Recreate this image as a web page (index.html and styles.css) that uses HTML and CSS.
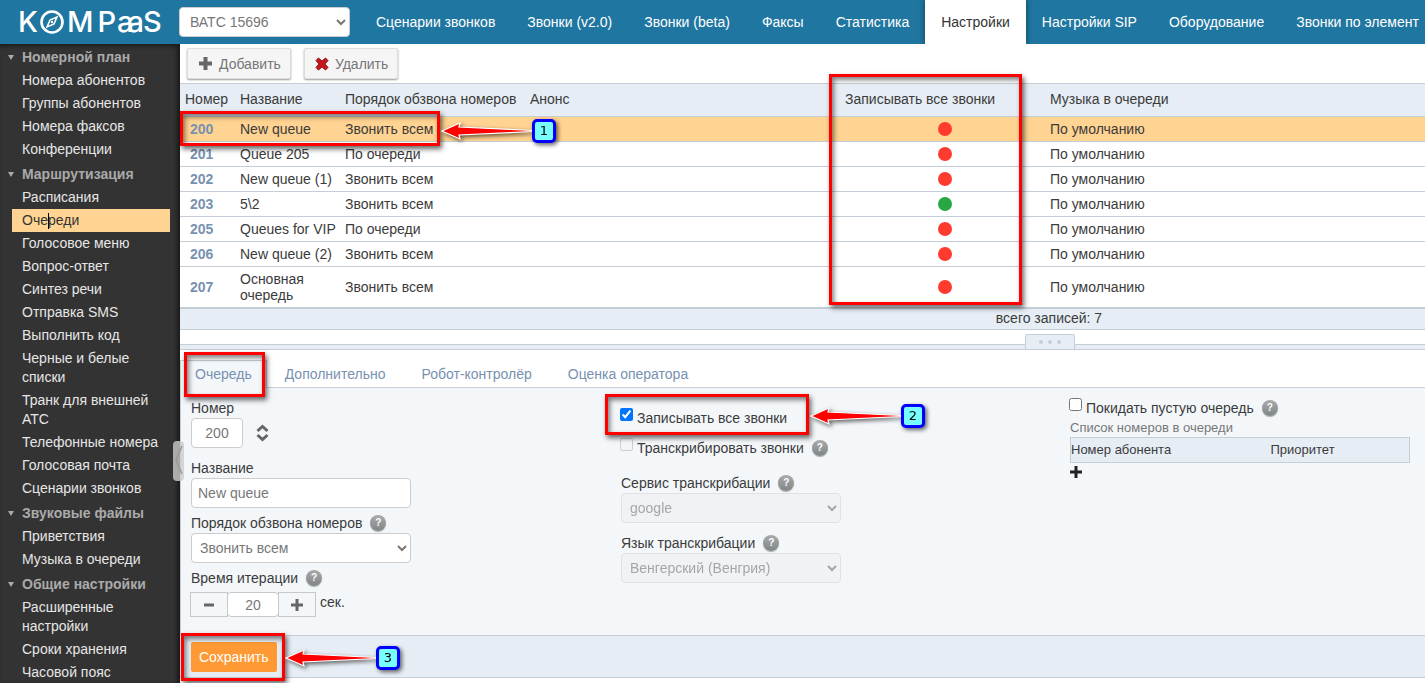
FILE: index.html
```html
<!DOCTYPE html>
<html lang="ru">
<head>
    <meta charset="utf-8">
    <title>KOMPaaS - Очереди</title>
    <link rel="stylesheet" href="styles.css">
</head>
<body>
    <svg class="defs" width="0" height="0">
        <defs>
            <symbol id="arrow" viewBox="0 0 92 22">
                <path d="M1 11L19 3L18 7L91 10.500V11.500L18 15L19 19Z" fill="#f00" stroke="#fff" stroke-width="1.200"/>
            </symbol>
        </defs>
    </svg>

    <header class="topbar">
        <a class="logo" href="#" aria-label="KOMPaaS">
            <span>K</span>
            <svg width="26" height="24" viewBox="0 0 26 24">
                <circle cx="13" cy="12" r="10.500" fill="none" stroke="#fff" stroke-width="2.600"/>
                <path d="M18 7L15 14L8 17L11 10Z" fill="none" stroke="#fff" stroke-width="1.600"/>
                <circle cx="13" cy="12" r="1.200" fill="#fff"/>
            </svg>
            <span class="logo-m">M</span><span class="logo-p">P</span><span class="logo-aa">aa</span><span>S</span>
        </a>
        <select class="account" aria-label="ВАТС"><option>ВАТС 15696</option></select>
        <nav class="topnav">
            <a href="#">Сценарии звонков</a>
            <a href="#">Звонки (v2.0)</a>
            <a href="#">Звонки (beta)</a>
            <a href="#">Факсы</a>
            <a href="#">Статистика</a>
            <a href="#" class="active">Настройки</a>
            <a href="#">Настройки SIP</a>
            <a href="#">Оборудование</a>
            <a href="#">Звонки по элемент</a>
        </nav>
    </header>

    <div class="layout">
        <aside class="sidebar">
            <section>
                <h3>Номерной план</h3>
                <a href="#">Номера абонентов</a>
                <a href="#">Группы абонентов</a>
                <a href="#">Номера факсов</a>
                <a href="#">Конференции</a>
            </section>
            <section>
                <h3>Маршрутизация</h3>
                <a href="#">Расписания</a>
                <a href="#" class="active">Оче<i class="caret"></i>реди</a>
                <a href="#">Голосовое меню</a>
                <a href="#">Вопрос-ответ</a>
                <a href="#">Синтез речи</a>
                <a href="#">Отправка SMS</a>
                <a href="#">Выполнить код</a>
                <a href="#">Черные и белые списки</a>
                <a href="#">Транк для внешней АТС</a>
                <a href="#">Телефонные номера</a>
                <a href="#">Голосовая почта</a>
                <a href="#">Сценарии звонков</a>
            </section>
            <section>
                <h3>Звуковые файлы</h3>
                <a href="#">Приветствия</a>
                <a href="#">Музыка в очереди</a>
            </section>
            <section>
                <h3>Общие настройки</h3>
                <a href="#">Расширенные настройки</a>
                <a href="#">Сроки хранения</a>
                <a href="#">Часовой пояс</a>
            </section>
        </aside>

        <main class="content">
            <button class="collapse" aria-label="Свернуть меню">
                <svg width="9" height="30" viewBox="0 0 9 30"><path d="M8 1L2 15L8 29" fill="none" stroke="#999" stroke-width="1.500"/></svg>
            </button>

            <div class="toolbar">
                <button class="tool">
                    <svg width="15" height="15" viewBox="0 0 15 15"><path d="M5.500 1h4v4.500H14v4H9.500V14h-4V9.500H1v-4h4.500z" fill="#666"/></svg>
                    Добавить
                </button>
                <button class="tool">
                    <svg width="14" height="14" viewBox="0 0 14 14"><path d="M3.500 1L7 4L10.500 1L13 3.500L10 7L13 10.500L10.500 13L7 10L3.500 13L1 10.500L4 7L1 3.500Z" fill="#c8161d" stroke="#8e1015" stroke-width="1"/></svg>
                    Удалить
                </button>
            </div>

            <table class="queues">
                <colgroup>
                    <col class="c-num"><col class="c-name"><col class="c-order"><col class="c-anons"><col class="c-rec"><col>
                </colgroup>
                <thead>
                    <tr><th>Номер</th><th>Название</th><th>Порядок обзвона номеров</th><th>Анонс</th><th>Записывать все звонки</th><th>Музыка в очереди</th></tr>
                </thead>
                <tbody>
                    <tr class="selected"><td class="num">200</td><td>New queue</td><td>Звонить всем</td><td></td><td class="rec"><i class="dot"></i></td><td>По умолчанию</td></tr>
                    <tr><td class="num">201</td><td>Queue 205</td><td>По очереди</td><td></td><td class="rec"><i class="dot"></i></td><td>По умолчанию</td></tr>
                    <tr><td class="num">202</td><td>New queue (1)</td><td>Звонить всем</td><td></td><td class="rec"><i class="dot"></i></td><td>По умолчанию</td></tr>
                    <tr><td class="num">203</td><td>5\2</td><td>Звонить всем</td><td></td><td class="rec"><i class="dot on"></i></td><td>По умолчанию</td></tr>
                    <tr><td class="num">205</td><td>Queues for VIP</td><td>По очереди</td><td></td><td class="rec"><i class="dot"></i></td><td>По умолчанию</td></tr>
                    <tr><td class="num">206</td><td>New queue (2)</td><td>Звонить всем</td><td></td><td class="rec"><i class="dot"></i></td><td>По умолчанию</td></tr>
                    <tr class="tall"><td class="num">207</td><td class="wrap">Основная очередь</td><td>Звонить всем</td><td></td><td class="rec"><i class="dot"></i></td><td>По умолчанию</td></tr>
                </tbody>
            </table>
            <div class="total">всего записей: 7</div>

            <div class="splitter"><span class="grip"><i></i><i></i><i></i></span></div>

            <nav class="tabs">
                <a href="#" class="active">Очередь</a>
                <a href="#">Дополнительно</a>
                <a href="#">Робот-контролёр</a>
                <a href="#">Оценка оператора</a>
            </nav>

            <form class="form">
                <div class="col">
                    <label for="number">Номер</label>
                    <div class="row number-row">
                        <input class="field short" id="number" type="text" value="200">
                        <svg width="13" height="18" viewBox="0 0 13 18"><path d="M1.500 7L6.500 2.500L11.500 7M1.500 11L6.500 15.500L11.500 11" fill="none" stroke="#666" stroke-width="3"/></svg>
                    </div>
                    <label for="name">Название</label>
                    <input class="field gap" id="name" type="text" value="New queue">
                    <div class="label-row"><label for="order">Порядок обзвона номеров</label><span class="help">?</span></div>
                    <select class="field gap" id="order"><option>Звонить всем</option></select>
                    <div class="label-row"><label for="time">Время итерации</label><span class="help">?</span></div>
                    <div class="row stepper">
                        <button type="button" aria-label="Меньше"><svg width="12" height="12" viewBox="0 0 12 12"><path d="M1 6h10" stroke="#666" stroke-width="3"/></svg></button>
                        <input id="time" type="text" value="20">
                        <button type="button" aria-label="Больше"><svg width="12" height="12" viewBox="0 0 12 12"><path d="M0 6h12M6 0v12" stroke="#666" stroke-width="3"/></svg></button>
                        <span class="unit">сек.</span>
                    </div>
                </div>
                <div class="col middle">
                    <div class="check"><input type="checkbox" id="record" checked><label for="record">Записывать все звонки</label></div>
                    <div class="check"><input type="checkbox" id="transcribe" disabled><label for="transcribe">Транскрибировать звонки</label><span class="help">?</span></div>
                    <div class="label-row service"><label for="service">Сервис транскрибации</label><span class="help">?</span></div>
                    <select class="field" id="service" disabled><option>google</option></select>
                    <div class="label-row lang"><label for="lang">Язык транскрибации</label><span class="help">?</span></div>
                    <select class="field" id="lang" disabled><option>Венгерский (Венгрия)</option></select>
                </div>
                <div class="col">
                    <div class="check"><input type="checkbox" id="leave"><label for="leave">Покидать пустую очередь</label><span class="help">?</span></div>
                    <table class="members">
                        <caption>Список номеров в очереди</caption>
                        <tr><th>Номер абонента</th><th>Приоритет</th></tr>
                    </table>
                    <button type="button" class="add" aria-label="Добавить номер"><svg width="12" height="12" viewBox="0 0 12 12"><path d="M0 6h12M6 0v12" stroke="#222" stroke-width="3"/></svg></button>
                </div>
            </form>
            <div class="savebar"><button class="save">Сохранить</button></div>
        </main>
    </div>

    <!-- подсказки инструкции поверх страницы -->
    <div class="frame frame-row"></div>
    <div class="frame frame-record"></div>
    <div class="frame frame-tab"></div>
    <div class="frame frame-check"></div>
    <div class="frame frame-save"></div>
    <div class="step step-1"><svg width="92" height="22"><use href="#arrow"/></svg><b>1</b></div>
    <div class="step step-2"><svg width="92" height="22"><use href="#arrow"/></svg><b>2</b></div>
    <div class="step step-3"><svg width="92" height="22"><use href="#arrow"/></svg><b>3</b></div>
</body>
</html>
```
FILE: styles.css
```css
* {
    box-sizing: border-box;
}
body {
    margin: 0;
    height: 100vh;
    display: flex;
    flex-direction: column;
    overflow: hidden;
    position: relative;
    background: #fff;
    color: #3b3b3b;
    font-family: "Liberation Sans", Arial, sans-serif;
    font-size: 14px;
    line-height: 20px;
}
a {
    text-decoration: none;
}
input, select, button {
    font-family: inherit;
    font-size: 14px;
}
.defs {
    position: absolute;
}

/* шапка */
.topbar {
    display: flex;
    align-items: center;
    height: 44px;
    flex: none;
    background: #1f76a1;
}
.logo {
    display: flex;
    align-items: center;
    width: 179px;
    padding-left: 18px;
    flex: none;
    color: #fff;
    font-family: Inter, sans-serif;
    font-size: 29px;
    font-weight: 500;
}
.logo svg {
    margin-left: 1px;
}
.logo-m {
    margin-left: 2px;
}
.logo-p {
    margin-left: 4px;
}
.logo-aa {
    letter-spacing: -6px;
    margin-left: 1px;
    margin-right: 5px;
}
.account {
    width: 171px;
    height: 30px;
    flex: none;
    padding: 0 6px;
    border: 1px solid #ccc;
    border-radius: 4px;
    background: #fff;
    color: #777;
}
.topnav {
    display: flex;
    align-self: stretch;
    flex: 1;
    min-width: 0;
    overflow: hidden;
    margin-left: 10px;
}
.topnav a {
    padding: 12px 16px;
    color: #fff;
    white-space: nowrap;
}
.topnav .active {
    background: #fff;
    color: #333;
    box-shadow: 0 0 6px rgba(0, 0, 0, .5);
}

.layout {
    display: flex;
    flex: 1;
    min-height: 0;
}

/* боковое меню */
.sidebar {
    width: 180px;
    flex: none;
    padding: 2px 10px 0 12px;
    overflow: hidden;
    background: #333;
    box-shadow: inset -3px 2px 4px rgba(0, 0, 0, .5);
}
.sidebar section + section {
    margin-top: 2px;
}
.sidebar h3, .sidebar a {
    display: block;
    margin: 0;
    padding: 2px 5px 2px 10px;
    font-size: 14px;
    line-height: 19px;
    color: #e6e6e6;
}
.sidebar h3 {
    position: relative;
    color: #aaa;
}
.sidebar h3::before {
    content: "";
    position: absolute;
    left: -4px;
    top: 9px;
    border: 3px solid transparent;
    border-top: 5px solid #aaa;
    border-bottom: 0;
}
.sidebar .active {
    background: #ffd391;
    color: #333;
}
.caret {
    display: inline-block;
    width: 1px;
    height: 16px;
    margin-right: -1px;
    vertical-align: middle;
    background: #000;
}

.content {
    flex: 1;
    min-width: 0;
    position: relative;
}
.collapse {
    position: absolute;
    left: -7px;
    top: 397px;
    width: 11px;
    height: 40px;
    padding: 0;
    border: 0;
    border-radius: 4px;
    background: rgba(204, 204, 204, .8);
}

.toolbar {
    display: flex;
    gap: 13px;
    height: 39px;
    padding: 4px 7px;
}
.tool {
    display: flex;
    align-items: center;
    gap: 6px;
    height: 31px;
    padding: 0 9px 0 10px;
    border: 1px solid #ddd;
    border-radius: 2px;
    background: #f5f5f5;
    color: #777;
    box-shadow: 0 1px 2px rgba(0, 0, 0, .4);
}

/* список очередей */
.queues {
    width: 100%;
    table-layout: fixed;
    border-collapse: collapse;
}
.c-num { width: 55px; }
.c-name { width: 105px; }
.c-order { width: 185px; }
.c-anons { width: 315px; }
.c-rec { width: 205px; }
.queues th, .queues td {
    height: 25px;
    padding: 0 0 0 5px;
    border-bottom: 1px solid #c5ced6;
    text-align: left;
    font-weight: normal;
    line-height: 16px;
    white-space: nowrap;
}
.queues th {
    height: 33px;
    padding-bottom: 2px;
    background: #e6edf4;
    border-top: 1px solid #c5ced6;
}
.queues .num {
    padding-left: 10px;
    color: #7891b0;
    font-weight: bold;
}
.queues .rec {
    text-align: center;
}
.queues .wrap {
    white-space: normal;
}
.queues .tall td {
    height: 41px;
}
.selected {
    background: #ffd391;
}
.dot {
    display: block;
    width: 14px;
    height: 14px;
    margin: 0 auto;
    border-radius: 50%;
    background: #ff3b30;
}
.dot.on {
    background: #28a745;
}
.total {
    height: 22px;
    padding-left: 493px;
    border-top: 1px solid #c5ced6;
    border-bottom: 1px solid #c5ced6;
    background: #e6edf4;
    text-align: center;
    line-height: 18px;
}
.splitter {
    position: relative;
    height: 6px;
    margin-top: 14px;
    border-top: 1px solid #c5ced6;
    border-bottom: 1px solid #c5ced6;
    background: #e6edf4;
}
.grip {
    position: absolute;
    left: 845px;
    bottom: 0;
    display: flex;
    align-items: center;
    justify-content: center;
    gap: 5px;
    width: 50px;
    height: 15px;
    border: 1px solid #c5ced6;
    border-bottom: 0;
    border-radius: 2px 2px 0 0;
    background: #e6edf4;
}
.grip i {
    width: 4px;
    height: 4px;
    border-radius: 50%;
    background: #c5ced6;
}

/* вкладки */
.tabs {
    display: flex;
    padding-top: 10px;
    border-bottom: 1px solid #c5ced6;
}
.tabs a {
    height: 27px;
    padding: 4px 18px;
    color: #7891b0;
}
.tabs .active {
    height: 28px;
    margin-bottom: -1px;
    padding: 3px 14px;
    border: 1px solid #c5ced6;
    border-bottom: 0;
    background: #f3f7fa;
}

/* форма */
.form {
    display: grid;
    grid-template-columns: 430px 449px 1fr;
    min-height: 247px;
    padding: 10px 15px 0 10px;
    border-left: 1px solid #c5ced6;
    background: #f3f7fa;
}
.col {
    display: flex;
    flex-direction: column;
}
.middle {
    padding-top: 10px;
}
.row, .label-row, .check {
    display: flex;
    align-items: center;
}
.label-row {
    height: 20px;
    gap: 8px;
}
.field {
    width: 220px;
    height: 30px;
    padding: 0 6px;
    border: 1px solid #ccc;
    border-radius: 4px;
    background: #fff;
    color: #777;
}
select.field {
    padding: 0 4px;
}
select.field:disabled {
    background: #eee;
    color: #555;
    opacity: .5;
}
.short {
    width: 52px;
    text-align: center;
}
.gap {
    margin-bottom: 5px;
}
.number-row {
    gap: 13px;
    margin-bottom: 10px;
}
.stepper {
    margin-top: 4px;
    margin-left: -1px;
}
.stepper button {
    width: 38px;
    height: 25px;
    padding: 0;
    border: 1px solid #c5c9cc;
    background: #f3f7fa;
}
.stepper input {
    width: 52px;
    height: 25px;
    margin: 0 -1px;
    border: 1px solid #c5c9cc;
    border-radius: 4px;
    color: #777;
    text-align: center;
}
.stepper svg {
    display: block;
    margin: 0 auto;
}
.unit {
    margin-left: 4px;
    align-self: flex-start;
}
.help {
    display: inline-block;
    width: 16px;
    height: 16px;
    border-radius: 50%;
    background: linear-gradient(#aaa, #7f8586);
    box-shadow: 0 1px 1px rgba(0, 0, 0, .3);
    color: #fff;
    font-size: 10px;
    font-weight: bold;
    line-height: 16px;
    text-align: center;
}
.check {
    gap: 4px;
    height: 20px;
    margin-left: -1px;
}
.check .help {
    margin-left: 4px;
}
.check + .check {
    margin-top: 10px;
}
.check input {
    width: 13px;
    height: 13px;
    margin: 0;
    align-self: flex-start;
}
.service {
    margin-top: 15px;
}
.lang {
    margin-top: 10px;
}
.members {
    width: 100%;
    table-layout: fixed;
    border-collapse: collapse;
    font-size: 13px;
}
.members caption {
    height: 19px;
    text-align: left;
    line-height: 19px;
    color: #777;
}
.members tr {
    height: 25px;
    background: #e6edf4;
    border: 1px solid #c5ced6;
}
.members th {
    padding: 0;
    font-weight: normal;
    text-align: left;
}
.members th:first-child {
    width: 200px;
}
.add {
    align-self: flex-start;
    margin-top: 3px;
    padding: 0;
    border: 0;
    background: none;
    line-height: 12px;
}
.add svg {
    display: block;
}
.savebar {
    padding: 6px 11px 5px;
    border-top: 1px solid #c5ced6;
    border-bottom: 1px solid #c5ced6;
    background: #e6edf4;
}
.save {
    display: block;
    height: 30px;
    padding: 0 8px;
    border: 0;
    border-radius: 2px;
    background: #ff9933;
    color: #fff;
}

/* рамки и номера шагов */
.frame {
    position: absolute;
    border: 3px solid #f00;
    box-shadow: 2px 3px 5px rgba(0, 0, 0, .6), inset 2px 3px 5px rgba(0, 0, 0, .5);
    pointer-events: none;
}
.frame-row { left: 180px; top: 111px; width: 260px; height: 35px; }
.frame-record { left: 829px; top: 74px; width: 193px; height: 231px; }
.frame-tab { left: 184px; top: 352px; width: 81px; height: 45px; }
.frame-check { left: 605px; top: 394px; width: 204px; height: 41px; }
.frame-save { left: 181px; top: 633px; width: 104px; height: 48px; }
.step {
    position: absolute;
    display: flex;
    align-items: center;
    filter: drop-shadow(2px 2px 2px rgba(0, 0, 0, .6));
    pointer-events: none;
}
.step b {
    width: 24px;
    height: 24px;
    margin-left: -1px;
    border: 3px solid #00f;
    border-radius: 5px;
    background: #7ff;
    color: #000;
    font: normal 13px/18px "DejaVu Sans", sans-serif;
    text-align: center;
}
.step-1 { left: 441px; top: 119px; }
.step-2 { left: 810px; top: 404px; }
.step-3 { left: 285px; top: 646px; }
```
